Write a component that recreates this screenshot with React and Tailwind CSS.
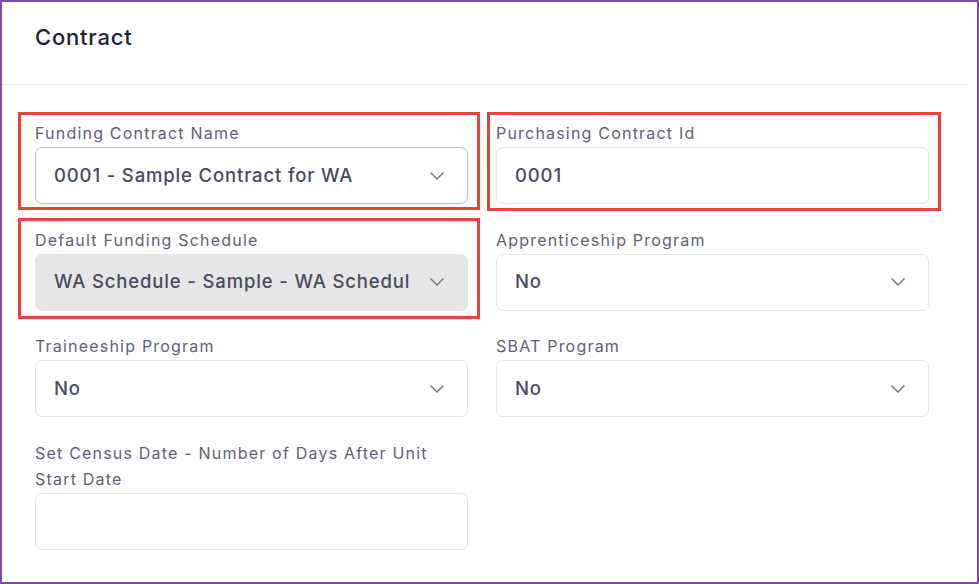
function Chevron() {
  return (
    <svg width="14" height="8" viewBox="0 0 14 8" fill="none" className="shrink-0">
      <path d="M1 1l6 6 6-6" stroke="#6f6f86" strokeWidth="1.4" strokeLinecap="round" strokeLinejoin="round" />
    </svg>
  );
}

function Field(props) {
  const { label, value, select, disabled, focused, box } = props;
  let boxClass = "bg-white border-[#e5e5ef]";
  if (disabled) boxClass = "bg-[#e6e6e6] border-[#e6e6e6]";
  if (focused) boxClass = "bg-white border-[#bebecb]";
  return (
    <div className="relative flex flex-col">
      {box && <div className={"absolute border-[3px] border-[#e8433a] pointer-events-none " + box} />}
      <div className="text-[16px] leading-[26px] text-[#5f5f7a] mb-[1px] tracking-[1.2px]">{label}</div>
      <div className={"h-[57px] rounded-[7px] border flex items-center pl-[18px] pr-[23px] " + boxClass}>
        <div className="flex-1 mr-[12px] text-[18.5px] text-[#4a4a66] font-medium tracking-[0.85px] whitespace-nowrap">
          {value}
        </div>
        {select && <Chevron />}
      </div>
    </div>
  );
}

function App() {
  return (
    <div className="w-[979px] h-[584px] bg-white border-2 border-[#7a4cb5] overflow-hidden font-['Inter',sans-serif]">
      <div className="mr-[8px]">
        <div className="h-[83px] border-b border-[#f0f0f3] pl-[33px] pt-[21px]">
          <div className="text-[22px] leading-[28px] font-medium text-[#1d2135] tracking-[0.8px]">Contract</div>
        </div>
        <div className="grid grid-cols-2 gap-x-[28px] gap-y-[22.7px] pl-[33px] pr-[40px] pt-[35px]">
          <Field
            label="Funding Contract Name"
            value="0001 - Sample Contract for WA"
            select
            focused
            box="-left-[17px] -top-[8px] -right-[12px] -bottom-[6px]"
          />
          <Field
            label="Purchasing Contract Id"
            value="0001"
            box="-left-[9px] -top-[8px] -right-[12px] -bottom-[7px]"
          />
          <Field
            label="Default Funding Schedule"
            value="WA Schedule - Sample - WA Schedul"
            select
            disabled
            box="-left-[17px] -top-[9px] -right-[12px] -bottom-[8px]"
          />
          <Field label="Apprenticeship Program" value="No" select />
          <Field label="Traineeship Program" value="No" select />
          <Field label="SBAT Program" value="No" select />
          <Field label={<>Set Census Date - Number of Days After Unit<br />Start Date</>} value="" />
        </div>
      </div>
    </div>
  );
}

export default App;
